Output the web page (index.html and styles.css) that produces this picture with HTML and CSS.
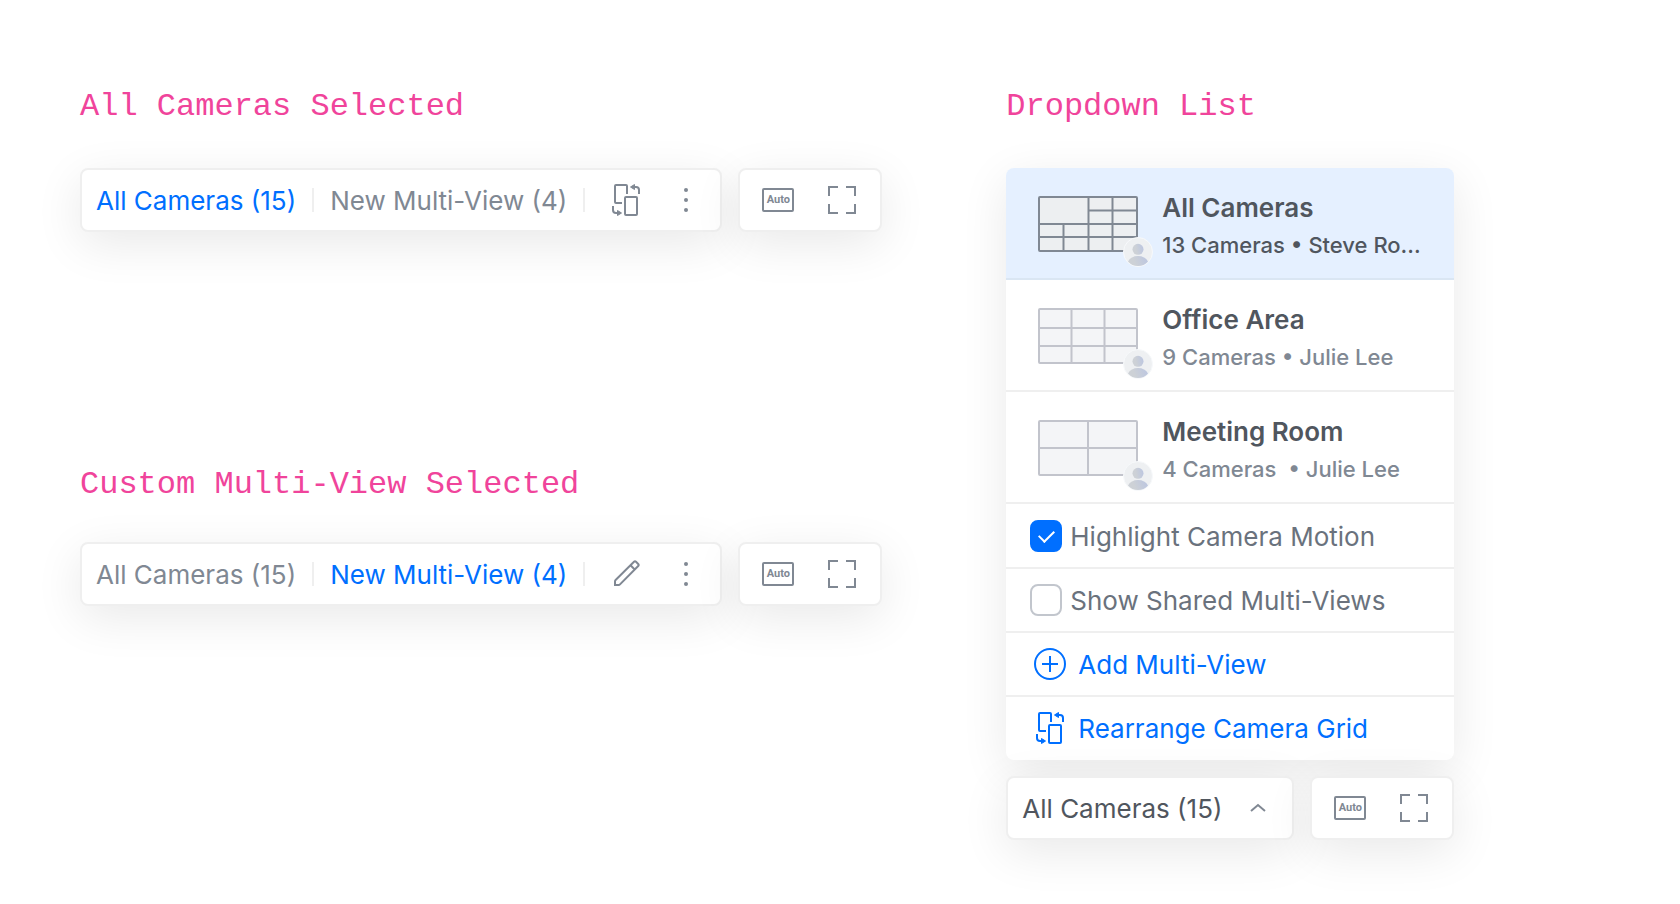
FILE: index.html
```html
<!DOCTYPE html>
<html lang="en">
<head>
  <meta charset="UTF-8">
  <meta name="viewport" content="width=device-width, initial-scale=1">
  <title>Multi-View Toolbar</title>
  <link rel="stylesheet" href="styles.css">
</head>
<body>

  <!-- shared icons -->
  <svg class="sprite" aria-hidden="true">
    <symbol id="icon-rearrange" viewBox="0 0 32 32">
      <path class="line" d="M12 19H6a1 1 0 0 1-1-1V2a1 1 0 0 1 1-1h10a1 1 0 0 1 1 1v8"/>
      <rect class="line" x="15" y="13" width="12" height="18" rx="1"/>
      <path class="line" d="M23 3h3q3 0 3 3v4M3 22v4q0 3 3 3h3"/>
      <path class="head" d="M20.500 3l4-2.500v5zM11.500 29l-4-2.500v5z"/>
    </symbol>
    <symbol id="icon-dots" viewBox="0 0 32 32">
      <circle class="solid" cx="16" cy="6" r="2"/>
      <circle class="solid" cx="16" cy="16" r="2"/>
      <circle class="solid" cx="16" cy="26" r="2"/>
    </symbol>
    <symbol id="icon-pencil" viewBox="0 0 32 32">
      <path class="line" d="M5 27v-3.600q0-.8.6-1.400L24 3.800q1-1 2 0L28.200 6q1 1 0 2L10 26.400q-.6.6-1.400.6zM20.500 7.300l4.200 4.200"/>
    </symbol>
    <symbol id="icon-full" viewBox="0 0 32 32">
      <path class="line" d="M3 12V3h9M20 3h9v9M29 20v9h-9M12 29H3v-9"/>
    </symbol>
    <symbol id="icon-plus" viewBox="0 0 32 32">
      <circle class="line" cx="16" cy="16" r="15"/>
      <path class="line" d="M16 8v16M8 16h16"/>
    </symbol>
    <symbol id="icon-up" viewBox="0 0 32 32">
      <path class="line" d="M9 19l7-6 7 6"/>
    </symbol>
    <symbol id="icon-user" viewBox="0 0 30 30">
      <circle cx="15" cy="15" r="14.500" fill="#eef0f2" stroke="#f7f9fb"/>
      <circle cx="15" cy="12.300" r="5.500" fill="url(#avatar-fill)"/>
      <path d="M5 24.500Q8 19 15 19t10 5.500Q21 29 15 29T5 24.500z" fill="url(#avatar-fill)"/>
    </symbol>
    <linearGradient id="avatar-fill" x1="0" y1="0.600" x2="1" y2="0.400">
      <stop offset="0.300" stop-color="#cdd1d6"/>
      <stop offset="1" stop-color="#bcc6e0"/>
    </linearGradient>
  </svg>

  <main>
    <div class="column">
      <section class="state">
        <h2>All Cameras Selected</h2>
        <div class="toolbar">
          <div class="bar views">
            <button class="tab active">All Cameras (15)</button>
            <span class="divider"></span>
            <button class="tab">New Multi-View (4)</button>
            <span class="divider"></span>
            <div class="actions">
              <button class="icon-btn" aria-label="Rearrange"><svg class="icon"><use href="#icon-rearrange"/></svg></button>
              <button class="icon-btn" aria-label="More"><svg class="icon"><use href="#icon-dots"/></svg></button>
            </div>
          </div>
          <div class="bar screen">
            <button class="auto">Auto</button>
            <button class="icon-btn" aria-label="Full screen"><svg class="icon"><use href="#icon-full"/></svg></button>
          </div>
        </div>
      </section>

      <section class="state custom">
        <h2>Custom Multi-View Selected</h2>
        <div class="toolbar">
          <div class="bar views">
            <button class="tab">All Cameras (15)</button>
            <span class="divider"></span>
            <button class="tab active">New Multi-View (4)</button>
            <span class="divider"></span>
            <div class="actions">
              <button class="icon-btn" aria-label="Edit"><svg class="icon"><use href="#icon-pencil"/></svg></button>
              <button class="icon-btn" aria-label="More"><svg class="icon"><use href="#icon-dots"/></svg></button>
            </div>
          </div>
          <div class="bar screen">
            <button class="auto">Auto</button>
            <button class="icon-btn" aria-label="Full screen"><svg class="icon"><use href="#icon-full"/></svg></button>
          </div>
        </div>
      </section>
    </div>

    <section class="dropdown">
      <h2>Dropdown List</h2>
      <div class="menu">
        <button class="view selected">
          <span class="thumb">
            <svg class="grid" viewBox="0 0 100 56">
              <rect x="1" y="1" width="98" height="54" rx="1"/>
              <path d="M1 28h98M1 41h98M50 14.500h49M50.500 1v54M74.500 1v54M25.500 28v27"/>
            </svg>
            <svg class="avatar"><use href="#icon-user"/></svg>
          </span>
          <span class="info">
            <span class="name">All Cameras</span>
            <span class="meta">13 Cameras • Steve Ro...</span>
          </span>
        </button>
        <button class="view">
          <span class="thumb">
            <svg class="grid" viewBox="0 0 100 56">
              <rect x="1" y="1" width="98" height="54" rx="1"/>
              <path d="M1 20h98M1 38h98M33.500 1v54M66.500 1v54"/>
            </svg>
            <svg class="avatar"><use href="#icon-user"/></svg>
          </span>
          <span class="info">
            <span class="name">Office Area</span>
            <span class="meta">9 Cameras • Julie Lee</span>
          </span>
        </button>
        <button class="view">
          <span class="thumb">
            <svg class="grid" viewBox="0 0 100 56">
              <rect x="1" y="1" width="98" height="54" rx="1"/>
              <path d="M1 28h98M50 1v54"/>
            </svg>
            <svg class="avatar"><use href="#icon-user"/></svg>
          </span>
          <span class="info">
            <span class="name">Meeting Room</span>
            <span class="meta">4 Cameras&nbsp; • Julie Lee</span>
          </span>
        </button>
        <label class="option"><input type="checkbox" checked><span class="label">Highlight Camera Motion</span></label>
        <label class="option"><input type="checkbox"><span class="label">Show Shared Multi-Views</span></label>
        <button class="option command"><svg class="icon"><use href="#icon-plus"/></svg><span class="label">Add Multi-View</span></button>
        <button class="option command"><svg class="icon"><use href="#icon-rearrange"/></svg><span class="label">Rearrange Camera Grid</span></button>
      </div>
      <div class="toolbar">
        <button class="bar current"><span class="label">All Cameras (15)</span><svg class="icon"><use href="#icon-up"/></svg></button>
        <div class="bar screen">
          <button class="auto">Auto</button>
          <button class="icon-btn" aria-label="Full screen"><svg class="icon"><use href="#icon-full"/></svg></button>
        </div>
      </div>
    </section>
  </main>

</body>
</html>
```
FILE: styles.css
```css
* {
  box-sizing: border-box;
}

body {
  margin: 0;
  background: #fff;
  color: #50565e;
  font-family: Inter, sans-serif;
  font-size: 26px;
  line-height: 32px;
}

main {
  display: flex;
  flex-wrap: wrap;
  gap: 64px 124px;
  padding: 88px 80px 64px;
}

h2 {
  margin: 0 0 42px;
  color: #f0449b;
  font-family: "Liberation Mono", monospace;
  font-size: 32px;
  font-weight: 400;
  line-height: 38px;
}

button {
  padding: 0;
  border: 0;
  background: none;
  color: inherit;
  font: inherit;
  text-align: left;
  cursor: pointer;
}

/* icons */
.sprite {
  position: absolute;
  width: 0;
  height: 0;
}

.icon {
  display: block;
  flex: none;
  width: 32px;
  height: 32px;
}

.line {
  fill: none;
  stroke: currentColor;
  stroke-width: 2;
}

.solid {
  fill: currentColor;
}

.head {
  fill: currentColor;
  stroke: currentColor;
  stroke-linejoin: round;
}

.auto {
  width: 32px;
  height: 24px;
  border: 2px solid #808893;
  border-radius: 2px;
  font-family: Roboto, sans-serif;
  font-size: 11px;
  font-weight: 700;
  line-height: 20px;
  text-align: center;
}

/* toolbars */
.custom {
  margin-top: 234px;
}

.custom h2 {
  margin-bottom: 38px;
}

.toolbar {
  display: flex;
  gap: 16px;
}

.bar {
  display: flex;
  align-items: center;
  height: 64px;
  border: 2px solid #efefef;
  border-radius: 8px;
  background: #fff;
  box-shadow: 0 12px 48px rgba(0, 0, 0, 0.09);
}

.views {
  gap: 16px;
  padding: 0 18px 0 14px;
  color: #808893;
}

.tab,
.label {
  padding-top: 2px;
  white-space: nowrap;
}

.tab.active {
  color: #006fff;
}

.divider {
  width: 2px;
  height: 24px;
  background: #efefef;
}

.actions {
  display: flex;
  gap: 28px;
  padding-left: 9px;
}

.screen {
  gap: 32px;
  padding: 0 22px;
  color: #808893;
}

.current {
  flex: 1;
  justify-content: space-between;
  padding: 0 18px 0 14px;
}

.current .icon {
  color: #808893;
}

/* dropdown */
.dropdown {
  width: 448px;
}

.menu {
  margin-bottom: 16px;
  overflow: hidden;
  border-radius: 8px;
  background: #fff;
  box-shadow: 0 12px 48px rgba(0, 0, 0, 0.09);
}

.view {
  display: flex;
  gap: 24px;
  width: 100%;
  height: 112px;
  padding: 24px 32px 0;
  border-bottom: 2px solid #efefef;
}

.view.selected {
  border-color: #dae6f3;
  background: #e5f0ff;
}

.thumb {
  position: relative;
  flex: none;
  width: 100px;
  height: 56px;
  margin-top: 4px;
}

.grid {
  display: block;
  width: 100px;
  height: 56px;
  fill: #f4f5f7;
  stroke: #c2c4cc;
  stroke-width: 2;
}

.selected .grid {
  fill: #edeff1;
  stroke: #808893;
}

.avatar {
  position: absolute;
  right: -15px;
  bottom: -15px;
  width: 30px;
  height: 30px;
}

.info {
  display: flex;
  flex-direction: column;
  gap: 8px;
}

.name {
  font-weight: 600;
}

.meta {
  color: #808893;
  font-size: 22px;
  font-weight: 450;
  line-height: 26px;
  white-space: nowrap;
}

.selected .meta {
  color: #50565e;
}

.option {
  display: flex;
  align-items: center;
  gap: 8px;
  width: 100%;
  height: 64px;
  padding: 0 24px;
  box-shadow: inset 0 -1px #efefef, 0 1px #efefef;
  color: #6a727d;
}

.option:last-child {
  box-shadow: none;
}

.option input {
  appearance: none;
  width: 32px;
  height: 32px;
  margin: 0;
  border: 2px solid #c2c6cd;
  border-radius: 8px;
}

.option input:checked {
  display: grid;
  place-items: center;
  border-color: #006fff;
  background: #006fff;
}

.option input:checked::before {
  content: "";
  width: 7px;
  height: 13px;
  margin-bottom: 4px;
  border: solid #fff;
  border-width: 0 2px 2px 0;
  rotate: 45deg;
}

.command {
  gap: 12px;
  padding-left: 28px;
  color: #006fff;
}
```
